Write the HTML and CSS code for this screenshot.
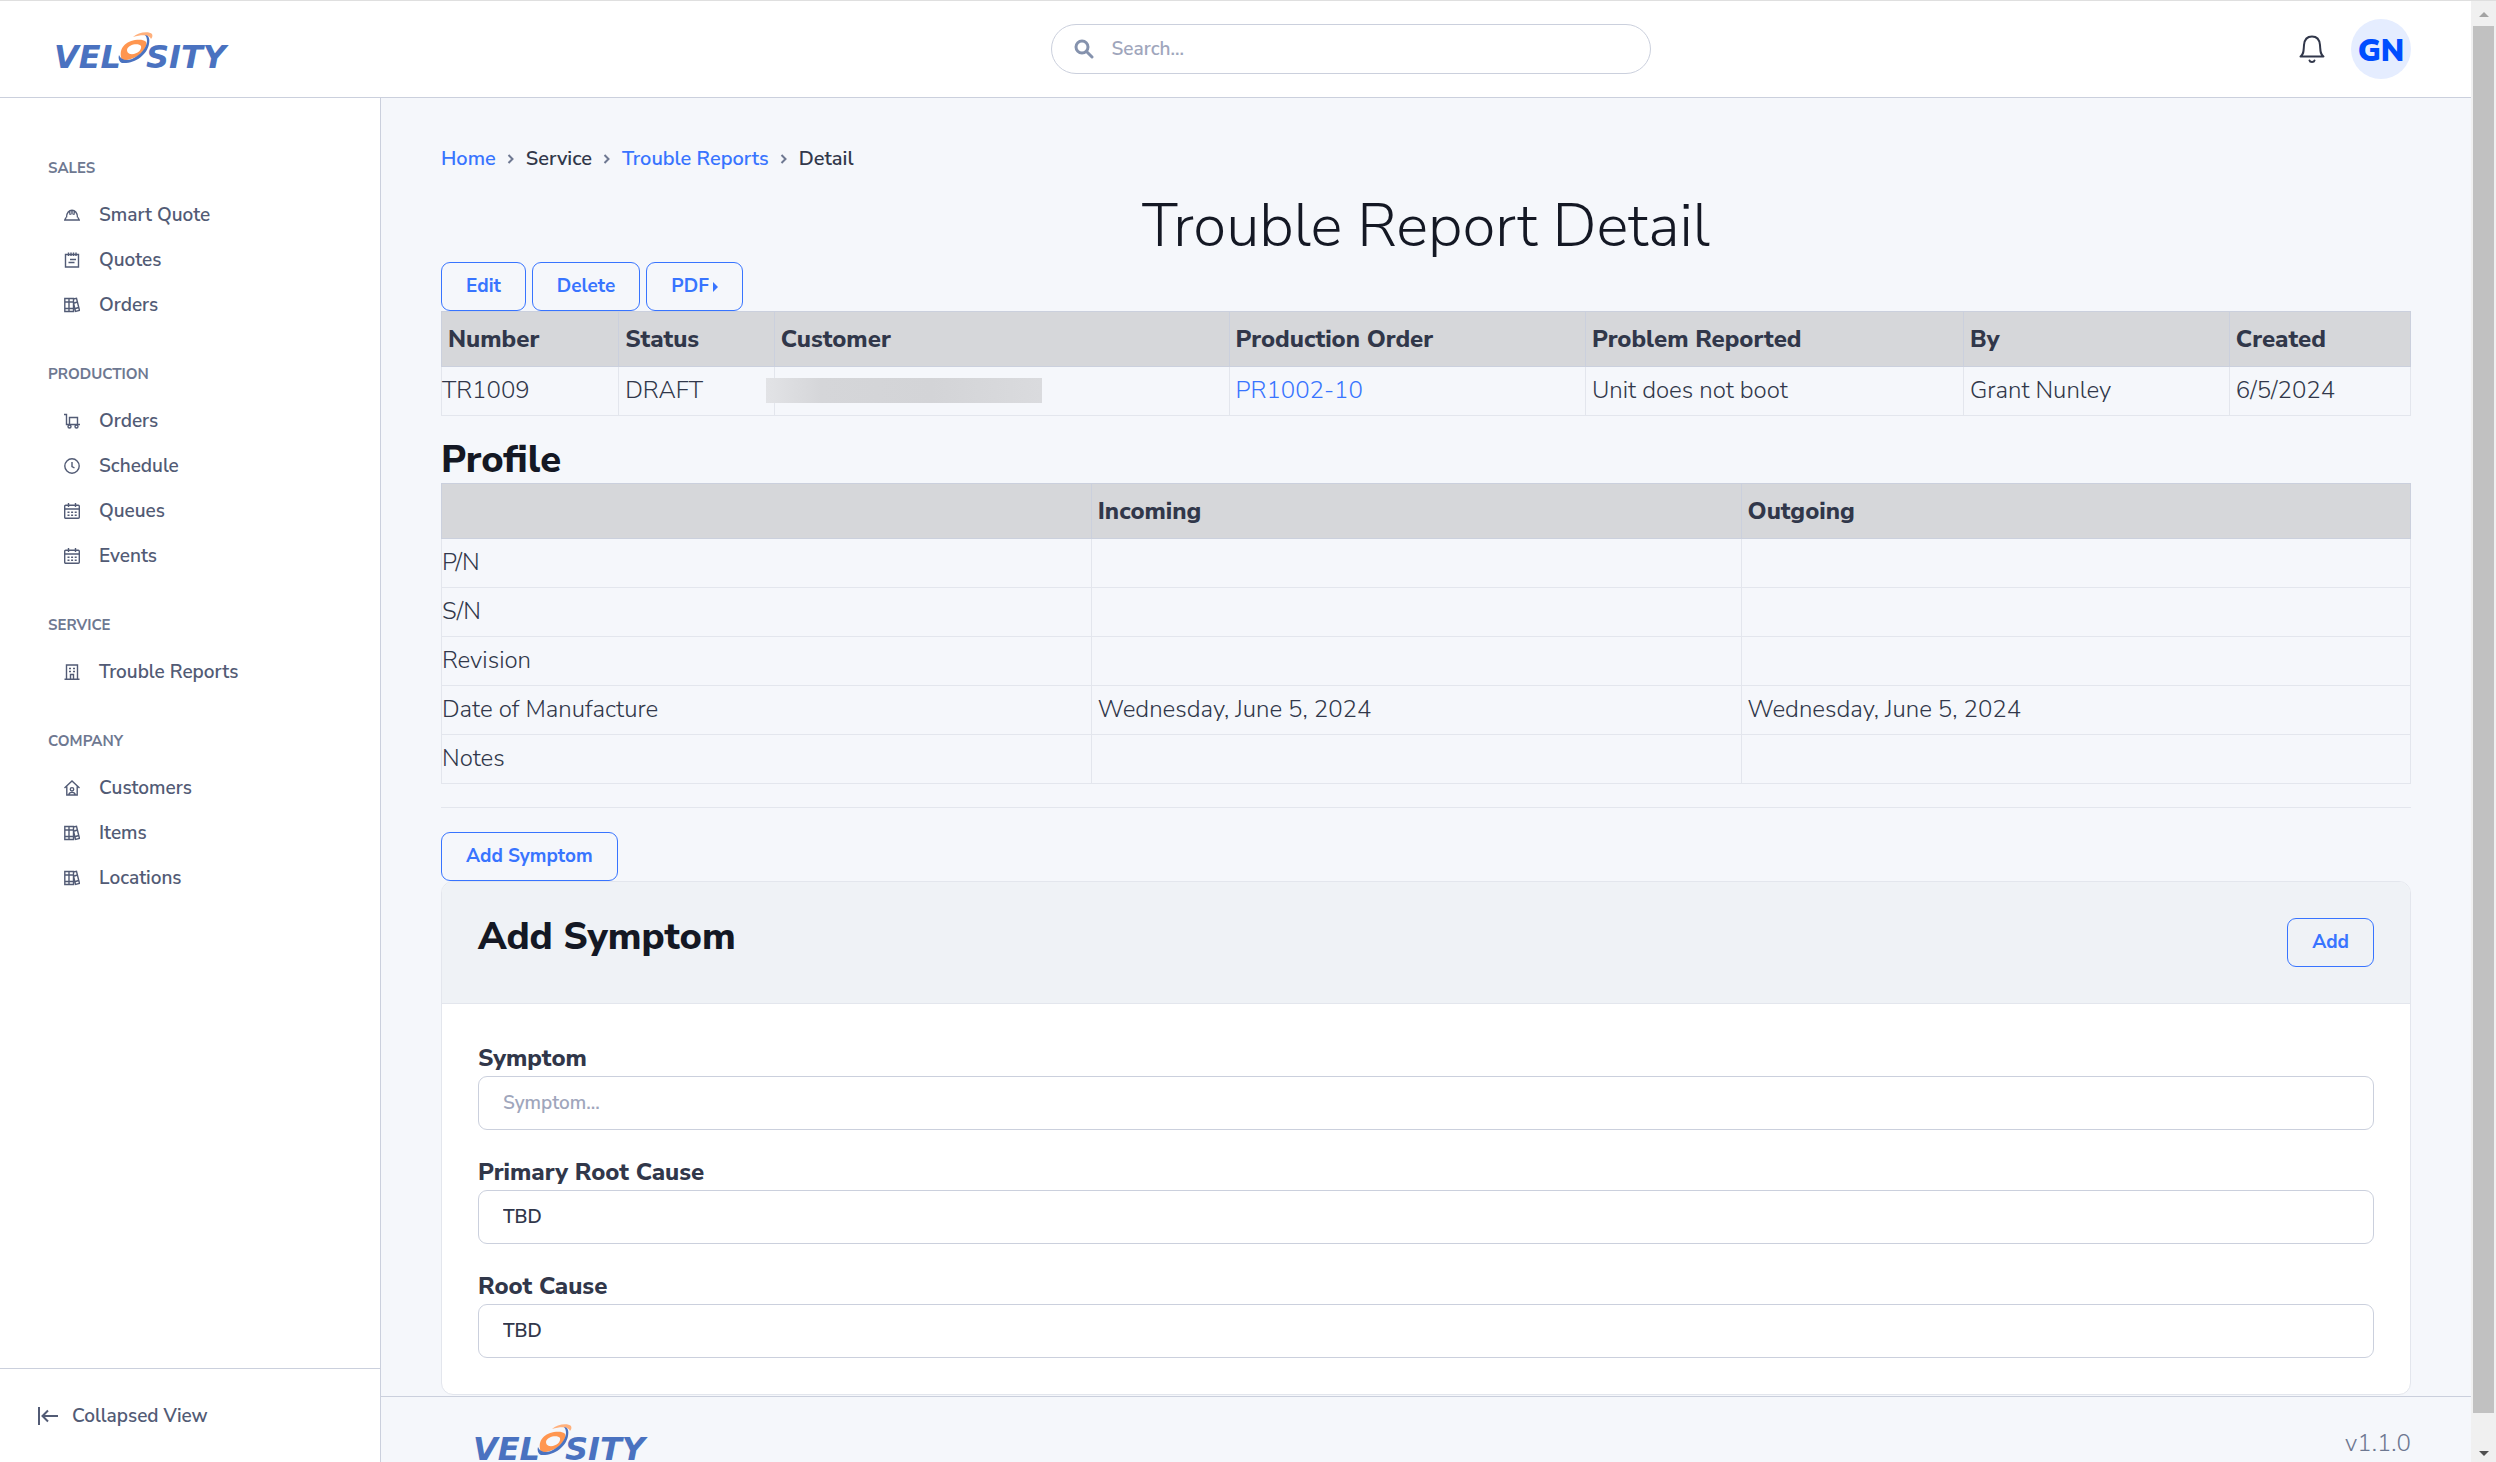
FILE: index.html
```html
<!DOCTYPE html>
<html lang="en">
<head>
<meta charset="utf-8">
<title>Trouble Report Detail</title>
<link rel="stylesheet" href="styles.css">
</head>
<body>
<svg class="defs" aria-hidden="true">
  <symbol id="logo" viewBox="0 0 190 44">
    <text class="wordmark" x="73" y="41" text-anchor="end">VEL</text>
    <text class="wordmark" x="98" y="41">SITY</text>
    <path d="M85 10C90 5 101 4 104 7C105 9 104 11 103 12C102 8 95 7 85 10Z" fill="#ffb07c"/>
    <path d="M74 33C70 23 76 15 87 13C96 12 100 14 98 19C95 29 81 34 74 33ZM82 27C89 28 94 23 93 19C91 16 80 17 79 23C79 25 80 26 82 27Z" fill="#ff9650" fill-rule="evenodd"/>
    <path d="M97 8C101 8 102 12 101 17C99 28 87 37 74 36C71 35 70 31 71 28C73 33 78 34 84 32C93 28 99 20 99 14C99 11 98 9 97 8Z" fill="#4a72c0"/>
  </symbol>
  <symbol id="i-hat" viewBox="0 0 16 16"><path d="M2.500 10.500C2.500 .8 13.500 .8 13.500 10.500M2 10.500L.8 13H15.200L14 10.500M5.500 4L6.200 8M10.500 4L9.800 8M8 3V7.500" /></symbol>
  <symbol id="i-note" viewBox="0 0 16 16"><path d="M1.500 2.500H14.500V15H1.500ZM4.500 .5V4M7 .5V4M9.500 .5V4M12 .5V4M6 7.500H12M4.500 10.500H10.500" /></symbol>
  <symbol id="i-books" viewBox="0 0 16 16"><path d="M.8 1.500H9.500V14.500H.8ZM5 1.500V14.500M.8 5H9.500M.8 11.500H9.500M9.500 2L12.500 1.300L15.500 13.500L11.500 14.500L9.500 6M10.300 6L13.500 5M11.500 11.500L14.700 10.500" /></symbol>
  <symbol id="i-cart" viewBox="0 0 16 16"><path d="M0 1.500H2.500V11.500H16M5.500 11V4.500H13.500V11"/><circle cx="5.500" cy="13.500" r="1.500"/><circle cx="12.500" cy="13.500" r="1.500"/></symbol>
  <symbol id="i-clock" viewBox="0 0 16 16"><circle cx="8" cy="8" r="7.200"/><path d="M8 4V8.500L10.500 10"/></symbol>
  <symbol id="i-cal" viewBox="0 0 16 16"><rect x=".7" y="2.200" width="14.600" height="13" rx="1"/><path d="M.7 6H15.300M4.500 0V4M11.500 0V4"/><path d="M3.500 9.200H13M3.500 12.300H13" stroke-dasharray="2 1.600"/></symbol>
  <symbol id="i-building" viewBox="0 0 16 16"><path d="M2.500 15V1H13.500V15M.5 15.200H15.500M6.500 15V10.500H9.500V15"/><path d="M5 4.500H7M9 4.500H11M5 7.500H7M9 7.500H11"/></symbol>
  <symbol id="i-home" viewBox="0 0 16 16"><path d="M.5 8L8 1L15.500 8M2.800 6.500V15H13.200V6.500M4.800 15C5 11.500 11 11.500 11.200 15"/><circle cx="8" cy="9.300" r="1.700"/></symbol>
  <symbol id="i-chev" viewBox="0 0 8 14"><path d="M1.500 3L5.500 7L1.500 11"/></symbol>
</svg>

<div class="window">
  <div class="page">
    <header class="topbar">
      <a class="brand" href="#" aria-label="Velosity"><svg class="logo"><use href="#logo"/></svg></a>
      <form class="search">
        <svg viewBox="0 0 20 20" aria-hidden="true"><circle cx="8" cy="8" r="6"/><path d="M12.500 12.500L18 18"/></svg>
        <input type="search" placeholder="Search..." aria-label="Search">
      </form>
      <div class="account">
        <button class="bell" aria-label="Notifications"><svg viewBox="0 0 26 30"><path d="M1.500 22.500C5 20 4.500 17 5 11C5.500 5 9 2.500 13 2.500S20.500 5 21 11C21.500 17 21 20 24.500 22.500ZM10.500 26.500C11 28.500 15 28.500 15.500 26.500"/></svg></button>
        <button class="avatar">GN</button>
      </div>
    </header>

    <div class="body">
      <aside class="sidebar">
        <nav class="nav">
          <section><h6>SALES</h6>
            <a href="#"><svg><use href="#i-hat"/></svg>Smart Quote</a>
            <a href="#"><svg><use href="#i-note"/></svg>Quotes</a>
            <a href="#"><svg><use href="#i-books"/></svg>Orders</a>
          </section>
          <section><h6>PRODUCTION</h6>
            <a href="#"><svg><use href="#i-cart"/></svg>Orders</a>
            <a href="#"><svg><use href="#i-clock"/></svg>Schedule</a>
            <a href="#"><svg><use href="#i-cal"/></svg>Queues</a>
            <a href="#"><svg><use href="#i-cal"/></svg>Events</a>
          </section>
          <section><h6>SERVICE</h6>
            <a href="#"><svg><use href="#i-building"/></svg>Trouble Reports</a>
          </section>
          <section><h6>COMPANY</h6>
            <a href="#"><svg><use href="#i-home"/></svg>Customers</a>
            <a href="#"><svg><use href="#i-books"/></svg>Items</a>
            <a href="#"><svg><use href="#i-books"/></svg>Locations</a>
          </section>
        </nav>
        <button class="collapse"><svg viewBox="0 0 20 18" aria-hidden="true"><path d="M1 0V18M4.500 9H20M10 3.500L4.500 9L10 14.500"/></svg>Collapsed View</button>
      </aside>

      <div class="scroll">
        <main class="content">
          <nav class="crumbs" aria-label="Breadcrumb">
            <a href="#">Home</a><svg><use href="#i-chev"/></svg><span>Service</span><svg><use href="#i-chev"/></svg><a href="#">Trouble Reports</a><svg><use href="#i-chev"/></svg><span>Detail</span>
          </nav>
          <h1>Trouble Report Detail</h1>
          <div class="actions">
            <button class="btn">Edit</button>
            <button class="btn">Delete</button>
            <button class="btn">PDF<i class="caret"></i></button>
          </div>
          <table class="grid">
            <colgroup><col class="c-num"><col class="c-status"><col class="c-cust"><col class="c-order"><col class="c-problem"><col class="c-by"><col class="c-date"></colgroup>
            <thead><tr><th>Number</th><th>Status</th><th>Customer</th><th>Production Order</th><th>Problem Reported</th><th>By</th><th>Created</th></tr></thead>
            <tbody><tr><td>TR1009</td><td>DRAFT</td><td class="masked"><span class="mask"></span></td><td><a href="#">PR1002-10</a></td><td>Unit does not boot</td><td>Grant Nunley</td><td>6/5/2024</td></tr></tbody>
          </table>
          <h2>Profile</h2>
          <table class="grid">
            <colgroup><col class="c-third"><col class="c-third"><col></colgroup>
            <thead><tr><th></th><th>Incoming</th><th>Outgoing</th></tr></thead>
            <tbody>
              <tr><td>P/N</td><td></td><td></td></tr>
              <tr><td>S/N</td><td></td><td></td></tr>
              <tr><td>Revision</td><td></td><td></td></tr>
              <tr><td>Date of Manufacture</td><td>Wednesday, June 5, 2024</td><td>Wednesday, June 5, 2024</td></tr>
              <tr><td>Notes</td><td></td><td></td></tr>
            </tbody>
          </table>
          <hr>
          <div class="actions"><button class="btn">Add Symptom</button></div>
          <form class="card">
            <div class="card-head"><h2>Add Symptom</h2><button class="btn" type="button">Add</button></div>
            <div class="card-body">
              <div class="field"><label for="symptom">Symptom</label><input id="symptom" type="text" placeholder="Symptom..."></div>
              <div class="field"><label for="primary">Primary Root Cause</label><select id="primary"><option>TBD</option></select></div>
              <div class="field"><label for="root">Root Cause</label><select id="root"><option>TBD</option></select></div>
            </div>
          </form>
        </main>
        <footer class="foot"><svg class="logo"><use href="#logo"/></svg><span>v1.1.0</span></footer>
      </div>
    </div>
  </div>
  <div class="scrollbar" aria-hidden="true"><i class="up"></i><div class="thumb"></div><i class="down"></i></div>
</div>
</body>
</html>
```
FILE: styles.css
```css
* { box-sizing: border-box; }
body { margin: 0; font-family: "Nunito Sans", "Open Sans", sans-serif; font-size: 24px; font-weight: 300; line-height: 36px; color: #31374a; background: #f5f7fb; }
button, input, select { font: inherit; color: inherit; }
a { color: #3874ff; text-decoration: none; }
h1, h2, h6 { margin: 0; }
.defs { display: none; }

.window { display: flex; height: 100vh; overflow: hidden; border-top: 1px solid #dfdfdf; }
.page { flex: 1; min-width: 0; display: flex; flex-direction: column; }

.topbar { display: flex; align-items: center; justify-content: space-between; height: 97px; flex: none; padding: 0 60px 0 48px; background: #fff; border-bottom: 1px solid #cbd0dd; }
.brand { display: flex; width: 354px; }
.logo { width: 190px; height: 44px; display: block; }
.wordmark { font: italic 700 32px "DejaVu Sans", sans-serif; fill: #4a72c0; }
.search { display: flex; align-items: center; width: 600px; height: 50px; border: 1px solid #cbd0dd; border-radius: 25px; padding: 0 24px 0 22px; }
.search svg { width: 20px; height: 20px; margin-right: 18px; fill: none; stroke: #8592ad; stroke-width: 3; stroke-linecap: round; }
.search input { flex: 1; border: 0; outline: 0; padding: 0; background: none; font-size: 19px; font-weight: 600; line-height: 28px; }
::placeholder { color: #9fa6bc; opacity: 1; font-weight: 600; }
.account { display: flex; align-items: center; gap: 26px; }
.bell, .avatar { border: 0; padding: 0; background: none; }
.bell svg { display: block; width: 26px; height: 30px; fill: none; stroke: #31374a; stroke-width: 2; stroke-linejoin: round; stroke-linecap: round; }
.avatar { width: 60px; height: 60px; padding-top: 3px; border-radius: 50%; background: #e5edff; color: #004dff; font-size: 31px; font-weight: 900; }

.body { flex: 1; min-height: 0; display: flex; }
.sidebar { flex: none; width: 381px; display: flex; flex-direction: column; background: #fff; border-right: 1px solid #cbd0dd; }
.nav { flex: 1; padding: 55px 48px 0; font-size: 19px; font-weight: 600; }
.nav section { margin-bottom: 32px; }
.nav h6 { font-size: 15px; font-weight: 700; line-height: 30px; margin-bottom: 9px; color: #6e7891; }
.nav a { display: flex; align-items: center; gap: 19px; height: 45px; padding-left: 16px; color: #525b75; }
.nav a svg { width: 16px; height: 16px; fill: none; stroke: currentColor; stroke-width: 1.4px; }
.collapse { display: flex; align-items: center; gap: 14px; height: 94px; padding: 0 38px; border: 0; border-top: 1px solid #cbd0dd; background: #fff; color: #525b75; font-size: 19px; font-weight: 600; }
.collapse svg { width: 20px; height: 18px; fill: none; stroke: currentColor; stroke-width: 2; }

.scroll { flex: 1; min-width: 0; overflow: hidden; background: #f5f7fb; }
.content { padding: 47px 60px 0; }
.crumbs { display: flex; align-items: center; height: 28px; margin-bottom: 17px; font-size: 20px; font-weight: 600; }
.crumbs svg { width: 8px; height: 14px; margin: 0 11px; fill: none; stroke: #6e7891; stroke-width: 2; }
h1 { font-size: 60px; font-weight: 300; line-height: 72px; text-align: center; color: #141824; }
h2 { font-size: 38px; font-weight: 800; line-height: 46px; color: #141824; }
.content > h2 { margin-top: 21px; }
.actions { display: flex; gap: 6px; }
.btn { display: flex; align-items: center; justify-content: center; height: 49px; padding: 0 24px 2px; border: 1px solid #3874ff; border-radius: 9px; background: none; color: #3874ff; font-size: 19px; font-weight: 700; }
.caret { margin: 3px 0 0 4px; border: 5px solid transparent; border-left-color: currentColor; border-right: 0; }

.grid { width: 100%; table-layout: fixed; border-collapse: collapse; }
.grid th { height: 55px; padding: 0 6px; text-align: left; font-weight: 800; background: #d6d7da; border: 1px solid #cbd0dd; }
.grid td { height: 49px; padding: 0 6px 3px; border: 1px solid #e3e6ed; }
.grid td:first-child { padding-left: 0; }
.c-num { width: 9%; } .c-status { width: 7.9%; } .c-cust { width: 23.1%; } .c-order { width: 18.1%; }
.c-problem { width: 19.2%; } .c-by { width: 13.5%; } .c-date { width: 9.2%; } .c-third { width: 33%; }
.masked { position: relative; }
.mask { position: absolute; left: -9px; top: 11px; width: 276px; height: 25px; background: linear-gradient(90deg, #e2e3e6, #d5d6d9 20%, #d3d4d7 60%, #dadbde); }
hr { margin: 23px 0 24px; border: 0; border-top: 1px solid #e3e6ed; }

.card { border: 1px solid #e3e6ed; border-radius: 12px; background: #fff; overflow: hidden; }
.card-head { display: flex; justify-content: space-between; padding: 36px; background: #eff2f6; border-bottom: 1px solid #e3e6ed; }
.card-head h2 { margin-top: -4px; }
.card-body { display: flex; flex-direction: column; gap: 24px; padding: 36px; }
.field label { display: block; font-weight: 800; }
.field input, .field select { display: block; width: 100%; height: 54px; padding: 0 24px; appearance: none; border: 1px solid #cbd0dd; border-radius: 9px; background: #fff; font-size: 19px; font-weight: 600; line-height: 28px; }
.foot { display: flex; justify-content: space-between; align-items: flex-start; margin-top: 1px; padding: 22px 60px 22px 86px; border-top: 1px solid #cbd0dd; color: #6e7891; }
.foot span { margin-top: 6px; }

.scrollbar { flex: none; width: 25px; padding: 0 2px; display: flex; flex-direction: column; align-items: center; background: #f0f0f0; }
.scrollbar .thumb { flex: 1; width: 21px; margin: 9px 0 38px; background: #c1c1c1; }
.up, .down { border: 5px solid transparent; }
.up { margin-top: 11px; border-top: 0; border-bottom-color: #a3a3a3; }
.down { margin-bottom: 6px; border-bottom: 0; border-top-color: #505050; }
```
